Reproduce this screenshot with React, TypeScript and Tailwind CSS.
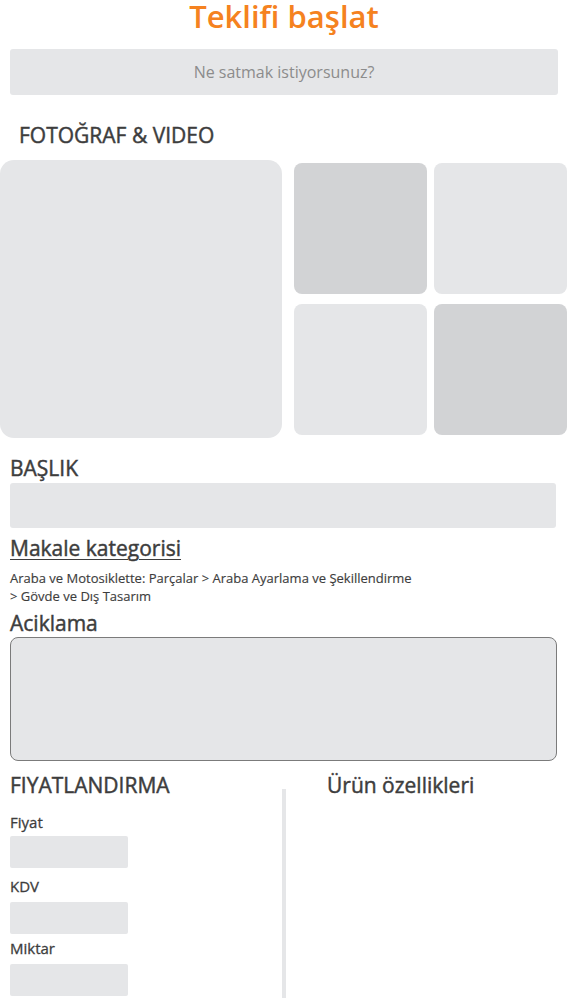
export default function App() {
  const font = { fontFamily: '"Open Sans", "Noto Sans", sans-serif' };
  const heading = "text-[21px] leading-[26px] [-webkit-text-stroke:0.45px_#3d3d3d]";
  const label = "text-[15px] leading-[20px] [-webkit-text-stroke:0.3px_#3d3d3d]";
  return (
    <div className="w-[568px] h-[1000px] bg-white text-[#3d3d3d] overflow-hidden" style={font}>
      <h1 className="text-center text-[31px] leading-[36px] font-semibold text-[#f58220] -mt-[2px]">Teklifi başlat</h1>

      <div className="mx-[10px] mt-[15px] h-[46px] rounded-[3px] bg-[#e5e6e8] flex items-center justify-center text-[16px] text-[#8c8c8c]">
        Ne satmak istiyorsunuz?
      </div>

      <h2 className={`ml-[19px] mt-[27px] ${heading}`}>FOTOĞRAF &amp; VIDEO</h2>

      <div className="mt-[12px] flex gap-[12px]">
        <div className="w-[282px] h-[278px] rounded-[14px] bg-[#e5e6e8]" />
        <div className="mt-[3px] grid grid-cols-2 gap-x-[7px] gap-y-[10px] h-fit">
          <div className="w-[133px] h-[131px] rounded-[8px] bg-[#d2d3d5]" />
          <div className="w-[133px] h-[131px] rounded-[8px] bg-[#e5e6e8]" />
          <div className="w-[133px] h-[131px] rounded-[8px] bg-[#e5e6e8]" />
          <div className="w-[133px] h-[131px] rounded-[8px] bg-[#d2d3d5]" />
        </div>
      </div>

      <div className="px-[10px]">
        <h2 className={`mt-[17px] ${heading}`}>BAŞLIK</h2>
        <div className="mt-[2px] h-[45px] w-[546px] rounded-[3px] bg-[#e5e6e8]" />

        <h2 className={`mt-[7px] ${heading} underline underline-offset-[3px] decoration-1`}>Makale kategorisi</h2>
        <p className="mt-[8px] text-[13px] leading-[18px] [-webkit-text-stroke:0.15px_#3d3d3d]">
          Araba ve Motosiklette: Parçalar &gt; Araba Ayarlama ve Şekillendirme
          <br />
          &gt; Gövde ve Dış Tasarım
        </p>

        <h2 className={`mt-[5px] ${heading}`}>Aciklama</h2>
        <div className="mt-[1px] h-[124px] w-[547px] rounded-[8px] border border-[#7b7b7b] bg-[#e5e6e8]" />
      </div>

      <div className="mt-[11px] flex">
        <div className="w-[282px] pl-[10px]">
          <h2 className={heading}>FIYATLANDIRMA</h2>
          <div className={`mt-[14px] ${label}`}>Fiyat</div>
          <div className="mt-[4px] h-[32px] w-[118px] rounded-[2px] bg-[#e5e6e8]" />
          <div className={`mt-[8px] ${label}`}>KDV</div>
          <div className="mt-[6px] h-[32px] w-[118px] rounded-[2px] bg-[#e5e6e8]" />
          <div className={`mt-[4px] ${label}`}>Miktar</div>
          <div className="mt-[6px] h-[32px] w-[118px] rounded-[2px] bg-[#e5e6e8]" />
        </div>
        <div className="mt-[17px] w-[4px] h-[209px] bg-[#e5e6e8]" />
        <div className="pl-[41px]">
          <h2 className={heading}>Ürün özellikleri</h2>
        </div>
      </div>
    </div>
  );
}
